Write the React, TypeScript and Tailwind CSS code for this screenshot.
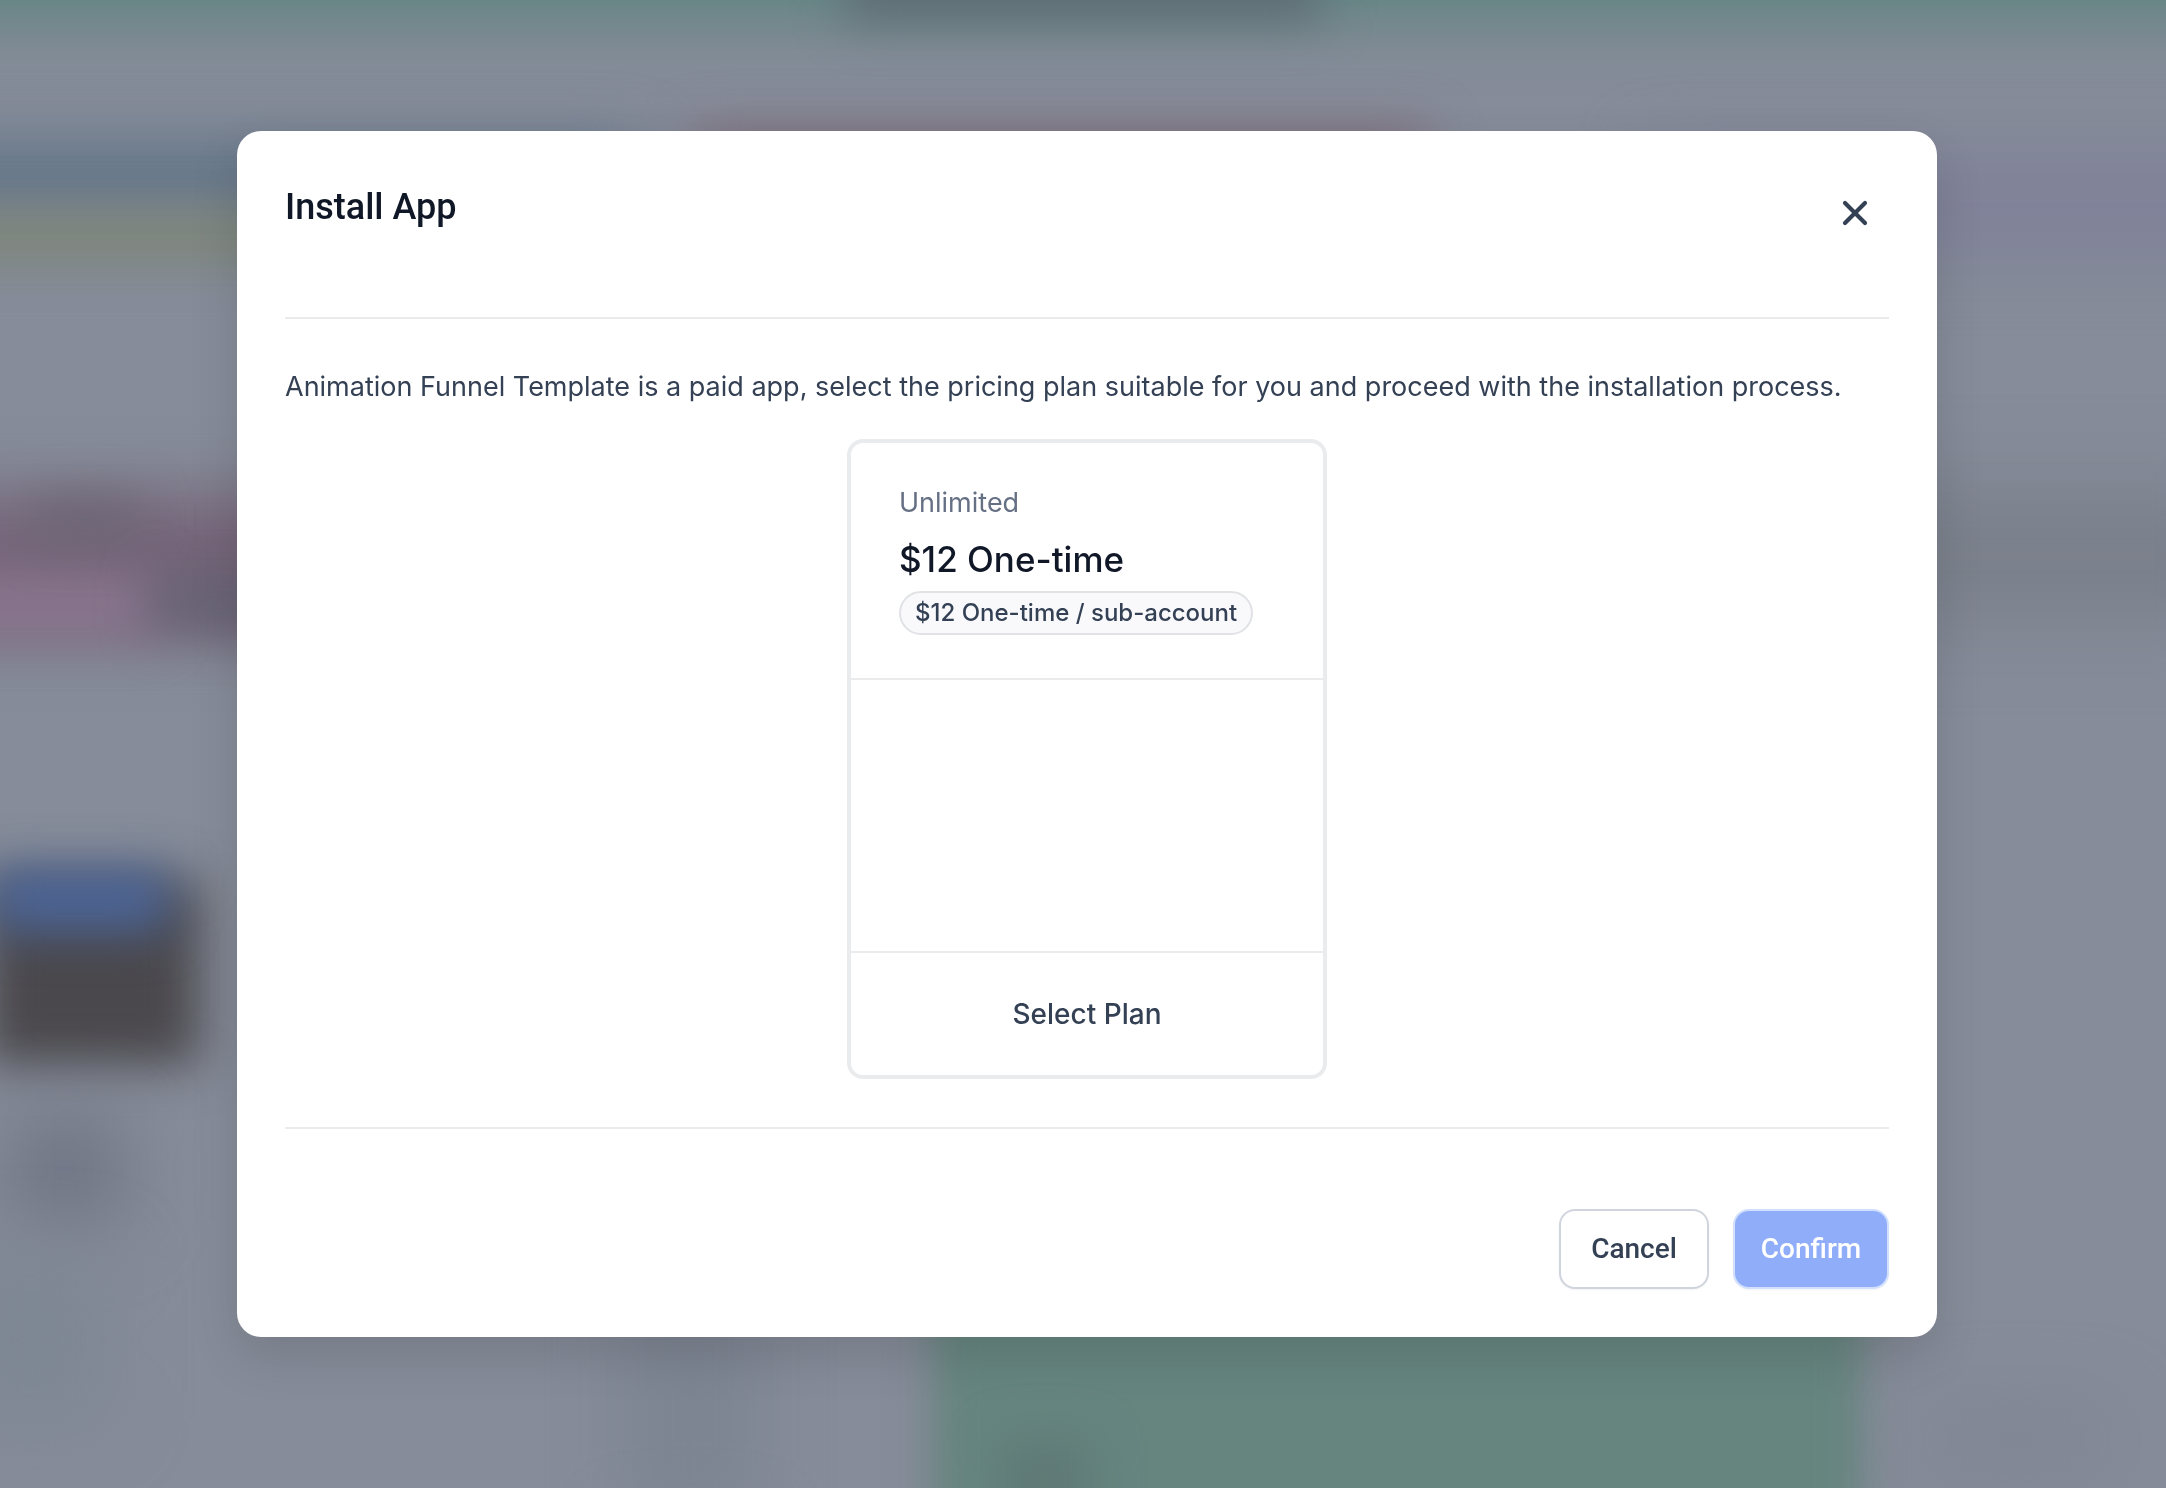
import { useState } from "react";
import { X } from "lucide-react";

const plans = [
  { id: "unlimited", name: "Unlimited", price: "$12 One-time", detail: "$12 One-time / sub-account" },
];

// Soft shapes of the page behind the dialog
const backdropShapes = [
  "-left-20 -right-20 -top-24 h-[116px] bg-[#5f8480] blur-[32px]",
  "left-[39%] -top-16 h-[84px] w-[22%] bg-[#5f6c74] blur-[24px]",
  "-left-20 top-[146px] h-[64px] w-[720px] bg-[#5e7286] blur-[32px]",
  "-left-20 top-[212px] h-[48px] w-[600px] bg-[#7f8678] blur-[24px]",
  "left-[32%] top-[126px] h-[100px] w-[34%] bg-[#7f6f7e] blur-[24px]",
  "right-[-80px] top-[150px] h-[110px] w-[600px] bg-[#808299] blur-[32px]",
  "-left-20 top-[494px] h-[140px] w-[600px] bg-[#766579] blur-[32px]",
  "-left-20 top-[575px] h-[60px] w-[240px] bg-[#89758e] blur-[24px]",
  "left-[30px] top-[500px] h-[40px] w-[110px] bg-[#6b6574] blur-[24px]",
  "left-[150px] top-[575px] h-[54px] w-[160px] bg-[#666274] blur-[24px]",
  "right-[-80px] top-[490px] h-[130px] w-[400px] bg-[#7a808b] blur-[40px]",
  "-left-4 top-[880px] h-[185px] w-[216px] bg-[#4a484c] blur-[24px]",
  "-left-2 top-[870px] h-[60px] w-[176px] bg-[#4a659a] blur-[24px]",
  "left-[10px] top-[1120px] h-[100px] w-[110px] bg-[#6c7281] blur-[40px]",
  "-left-10 top-[1260px] h-[160px] w-[140px] bg-[#7d8693] blur-[40px]",
  "left-[620px] top-[1260px] h-[260px] w-[140px] bg-[#7d8592] blur-[32px]",
  "left-[43%] right-[14%] top-[1240px] -bottom-20 bg-[#66857f] blur-[20px]",
  "left-[1000px] top-[1440px] h-[80px] w-[90px] bg-[#5f7975] blur-[24px]",
  "right-[60px] top-[1415px] h-[50px] w-[180px] bg-[#7e8290] blur-[40px]",
];

function Backdrop() {
  return (
    <div aria-hidden="true" className="fixed inset-0 -z-10 overflow-hidden bg-[#868c99]">
      {backdropShapes.map((shape) => (
        <div key={shape} className={`absolute ${shape}`} />
      ))}
    </div>
  );
}

export default function App() {
  const [selected, setSelected] = useState<string | null>(null);

  return (
    <div className="relative isolate flex min-h-screen items-center justify-center pb-5 pl-2 font-[Inter,sans-serif]">
      <Backdrop />

      <div
        role="dialog"
        aria-modal="true"
        aria-labelledby="install-title"
        className="w-full max-w-[1700px] rounded-3xl bg-white p-12 shadow-[0_20px_50px_rgba(0,0,0,0.12)]"
      >
        {/* Header */}
        <div className="flex items-start justify-between border-b-2 border-[#eaebec] pb-[70px]">
          <h1
            id="install-title"
            className="font-[Roboto,sans-serif] text-4xl leading-[56px] font-medium text-[#101828]"
          >
            Install App
          </h1>
          <button
            type="button"
            aria-label="Close"
            className="flex size-[68px] items-center justify-center text-[#344054]"
          >
            <X size={40} strokeWidth={2.5} />
          </button>
        </div>

        {/* Plans */}
        <div className="border-b-2 border-[#eaebec] py-12">
          <p className="text-[27px] leading-10 text-[#344054]">
            Animation Funnel Template is a paid app, select the pricing plan suitable for you and proceed
            with the installation process.
          </p>
          <div className="mt-8 flex justify-center gap-8">
            {plans.map((plan) => (
              <div key={plan.id} className="w-[480px] rounded-2xl border-4 border-[#eaebed]">
                <div className="px-12 pt-10 pb-[43px]">
                  <h2 className="text-[27px] leading-10 text-[#667085]">{plan.name}</h2>
                  <p className="mt-2 text-[35px] leading-[56px] font-medium text-[#101828]">{plan.price}</p>
                  <span className="mt-1 flex h-11 w-fit items-center rounded-full border-2 border-[#e0e2e6] bg-[#f9f9fc] px-3.5 text-2xl font-medium whitespace-nowrap text-[#344054]">
                    {plan.detail}
                  </span>
                </div>
                <div className="h-[275px] border-y-2 border-[#eaebed]" />
                <button
                  type="button"
                  aria-pressed={selected === plan.id}
                  onClick={() => setSelected(plan.id)}
                  className="h-[122px] w-full text-[28px] leading-10 font-medium text-[#344054]"
                >
                  Select Plan
                </button>
              </div>
            ))}
          </div>
        </div>

        {/* Footer */}
        <div className="flex justify-end gap-6 pt-20 font-[Roboto,sans-serif] text-[28px] font-medium">
          <button
            type="button"
            className="h-20 w-[150px] rounded-2xl border-2 border-[#d0d5dd] bg-white text-[#344054] shadow-xs"
          >
            Cancel
          </button>
          <button
            type="button"
            className="h-20 w-[156px] rounded-2xl border-2 border-[#d1e0ff] bg-[#8fadf8] text-white shadow-xs"
          >
            Confirm
          </button>
        </div>
      </div>
    </div>
  );
}
